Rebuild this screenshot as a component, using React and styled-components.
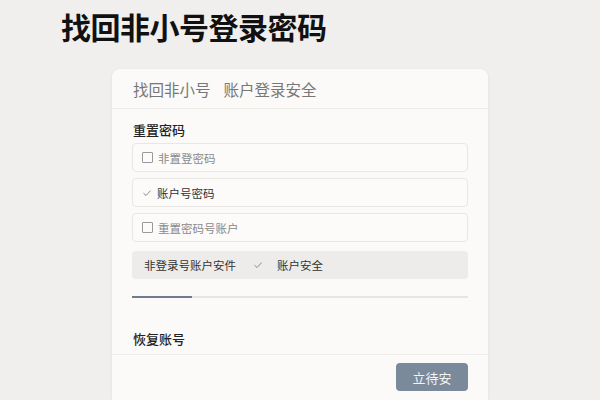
import React from 'react'
import styled, { createGlobalStyle } from 'styled-components'

const Global = createGlobalStyle`
    html, body {
        margin: 0;
        padding: 0;
        background: #f0efed;
        font-family: "Noto Sans CJK SC", "Noto Sans", sans-serif;
    }
    #root {
        width: 600px;
        height: 400px;
        overflow: hidden;
    }
`

const Page = styled.div`
    width: 600px;
    height: 400px;
    display: flex;
    flex-direction: column;
    align-items: center;
    background: #f0efed;
`

const Title = styled.h1`
    align-self: flex-start;
    margin: 6px 0 0 61px;
    font-size: 30px;
    line-height: 40px;
    font-weight: 700;
    color: #111;
    letter-spacing: -0.5px;
`

const Card = styled.div`
    margin-top: 23px;
    width: 376px;
    flex: 1;
    background: #fbfaf8;
    border-radius: 8px 8px 0 0;
    box-shadow: 0 1px 4px rgba(0, 0, 0, 0.06);
    display: flex;
    flex-direction: column;
`

const Header = styled.div`
    height: 39px;
    display: flex;
    align-items: center;
    gap: 13px;
    padding: 0 21px;
    border-bottom: 1px solid #ecebe8;
    font-size: 15.5px;
    color: #777;
`

const Body = styled.div`
    padding: 12px 20px 0;
    display: flex;
    flex-direction: column;
`

const Section = styled.div`
    font-size: 13px;
    color: #222;
    font-weight: 500;
    line-height: 18px;
    padding-left: 1px;
`

const Options = styled.div`
    margin-top: 4px;
    display: flex;
    flex-direction: column;
    gap: 6px;
`

const Option = styled.div`
    height: 27px;
    border: 1px solid #e8e7e4;
    border-radius: 4px;
    background: #fcfbf9;
    display: flex;
    align-items: center;
    gap: 5px;
    padding: 0 9px;
    font-size: 11.5px;
    color: ${({ $active }) => ($active ? '#333' : '#8a8a8a')};
`

const Box = styled.span`
    width: 9px;
    height: 9px;
    border: 1px solid #999;
    border-radius: 1px;
`

const Check = styled.svg`
    width: 10px;
    height: 10px;
    flex: none;
`

const Strip = styled.div`
    margin-top: 9px;
    height: 28px;
    border-radius: 4px;
    background: #edecea;
    display: flex;
    align-items: center;
    padding: 0 12px;
    font-size: 11.5px;
    color: #333;
`

const StripCheck = styled(Check)`
    margin: 0 14px 0 17px;
`

const Track = styled.div`
    margin-top: 17px;
    height: 2px;
    background: #e6e5e2;
    display: flex;
`

const Thumb = styled.div`
    width: 60px;
    height: 2px;
    background: #6c7d90;
`

const Recover = styled(Section)`
    margin-top: 32px;
`

const Footer = styled.div`
    margin-top: 6px;
    border-top: 1px solid #eeede9;
    padding: 8px 20px 0;
    display: flex;
    justify-content: flex-end;
`

const Button = styled.button`
    width: 72px;
    height: 28px;
    border: none;
    border-radius: 4px;
    background: #7b8a9a;
    color: #f2f4f6;
    font-family: inherit;
    font-size: 13px;
`

const Tick = ({ as: Comp = Check }) => (
    <Comp viewBox="0 0 10 10">
        <path d="M1.5 5.2 L4 7.5 L8.6 2.6" fill="none" stroke="#888" strokeWidth="1" />
    </Comp>
)

const App = () => {
    const options = [
        { label: '非置登密码', active: false },
        { label: '账户号密码', active: true },
        { label: '重置密码号账户', active: false },
    ]
    return (
        <Page>
            <Global />
            <Title>找回非小号登录密码</Title>
            <Card>
                <Header>
                    <span>找回非小号</span>
                    <span>账户登录安全</span>
                </Header>
                <Body>
                    <Section>重置密码</Section>
                    <Options>
                        {options.map((o) => (
                            <Option key={o.label} $active={o.active}>
                                {o.active ? <Tick /> : <Box />}
                                {o.label}
                            </Option>
                        ))}
                    </Options>
                    <Strip>
                        非登录号账户安件
                        <Tick as={StripCheck} />
                        账户安全
                    </Strip>
                    <Track>
                        <Thumb />
                    </Track>
                    <Recover>恢复账号</Recover>
                </Body>
                <Footer>
                    <Button>立待安</Button>
                </Footer>
            </Card>
        </Page>
    )
}

export default App
